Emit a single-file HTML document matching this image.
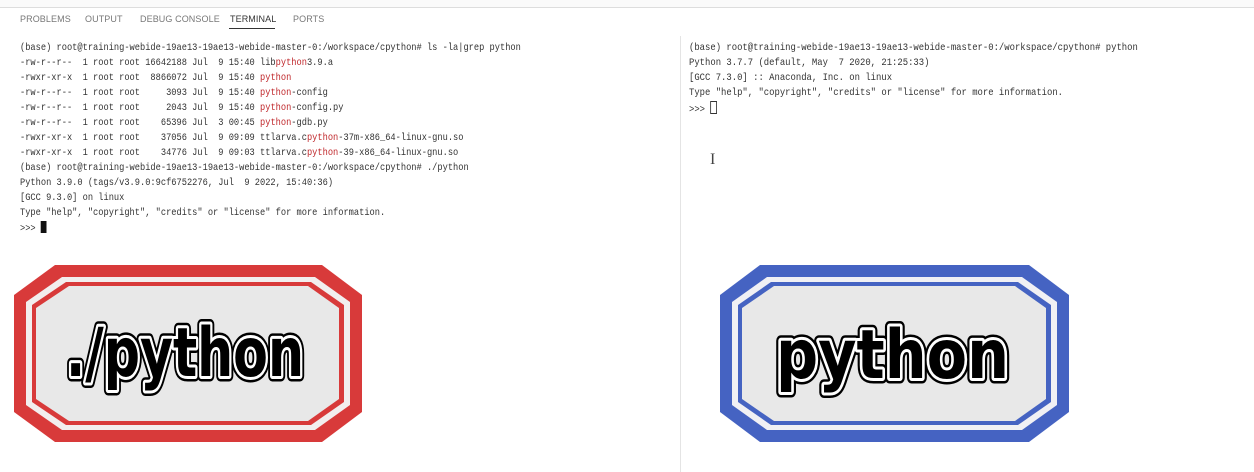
<!DOCTYPE html>
<html><head><meta charset="utf-8"><style>
html,body{margin:0;padding:0;background:#fff;width:1254px;height:472px;overflow:hidden;position:relative;font-family:"Liberation Sans",sans-serif}
.top{position:absolute;left:0;top:0;width:1254px;height:7px;border-bottom:1px solid #ddd;background:#fafafa}
.tab{position:absolute;top:14px;font-size:9px;color:#777;letter-spacing:0.1px}
.term{position:absolute;font-family:"Liberation Mono",monospace;font-size:10.5px;line-height:15px;color:#333;white-space:pre;transform-origin:0 0}
.l{left:20px;top:41px;transform:scaleX(0.828)}
.r{left:689px;top:41px;transform:scaleX(0.848)}
.h{color:#c0282c}
.vd{position:absolute;left:680px;top:36px;width:1px;height:436px;background:#e4e4e4}
.cur{display:inline-block;width:7px;height:12px;background:#111;vertical-align:-2px}
.cur2{display:inline-block;width:6px;height:11px;border:1px solid #333;vertical-align:-2px}
</style></head><body>
<div class="top"></div>
<div class="tab" style="left:20px">PROBLEMS</div>
<div class="tab" style="left:85px">OUTPUT</div>
<div class="tab" style="left:140px">DEBUG CONSOLE</div>
<div class="tab" style="left:230px;color:#333">TERMINAL</div>
<div style="position:absolute;left:229px;top:28px;width:46px;height:1px;background:#333"></div>
<div class="tab" style="left:293px">PORTS</div>
<div class="vd"></div>
<div class="term l">(base) root@training-webide-19ae13-19ae13-webide-master-0:/workspace/cpython# ls -la|grep python
-rw-r--r--  1 root root 16642188 Jul  9 15:40 lib<span class="h">python</span>3.9.a
-rwxr-xr-x  1 root root  8866072 Jul  9 15:40 <span class="h">python</span>
-rw-r--r--  1 root root     3093 Jul  9 15:40 <span class="h">python</span>-config
-rw-r--r--  1 root root     2043 Jul  9 15:40 <span class="h">python</span>-config.py
-rw-r--r--  1 root root    65396 Jul  3 00:45 <span class="h">python</span>-gdb.py
-rwxr-xr-x  1 root root    37056 Jul  9 09:09 ttlarva.c<span class="h">python</span>-37m-x86_64-linux-gnu.so
-rwxr-xr-x  1 root root    34776 Jul  9 09:03 ttlarva.c<span class="h">python</span>-39-x86_64-linux-gnu.so
(base) root@training-webide-19ae13-19ae13-webide-master-0:/workspace/cpython# ./python
Python 3.9.0 (tags/v3.9.0:9cf6752276, Jul  9 2022, 15:40:36)
[GCC 9.3.0] on linux
Type "help", "copyright", "credits" or "license" for more information.
&gt;&gt;&gt; <span class="cur"></span></div>
<div class="term r">(base) root@training-webide-19ae13-19ae13-webide-master-0:/workspace/cpython# python
Python 3.7.7 (default, May  7 2020, 21:25:33)
[GCC 7.3.0] :: Anaconda, Inc. on linux
Type "help", "copyright", "credits" or "license" for more information.
&gt;&gt;&gt; <span class="cur2"></span></div>
<div style="position:absolute;left:710px;top:151px;font-size:16px;color:#444;font-family:'Liberation Serif',serif">I</div>
<svg width="1254" height="472" style="position:absolute;left:0;top:0">
<g>
<polygon points="55,265 322,265 362,295 362,412 322,442 55,442 14,412 14,295" fill="#d83a3a"/>
<polygon points="62,277 315,277 350,302 350,405 315,430 62,430 26,405 26,302" fill="#f2eeee"/>
<polygon points="66,282 311,282 344,305 344,402 311,425 66,425 32,402 32,305" fill="#d83a3a"/>
<polygon points="69,286 308,286 339,308 339,399 308,421 69,421 36,399 36,308" fill="#e8e8e8"/>
</g>
<g>
<polygon points="760,265 1029,265 1069,295 1069,412 1029,442 760,442 720,412 720,295" fill="#4563c2"/>
<polygon points="767,277 1022,277 1057,302 1057,405 1022,430 767,430 732,405 732,302" fill="#f0f0f4"/>
<polygon points="771,282 1018,282 1051,305 1051,402 1018,425 771,425 738,402 738,305" fill="#4563c2"/>
<polygon points="774,286 1015,286 1046,308 1046,399 1015,421 774,421 742,399 742,308" fill="#e8e8e8"/>
</g>
<g font-family="DejaVu Sans, sans-serif" font-weight="bold" font-size="68" stroke-linejoin="round">
<text x="66" y="376" textLength="238" lengthAdjust="spacingAndGlyphs" fill="#000" stroke="#000" stroke-width="11">./python</text>
<text x="66" y="376" textLength="238" lengthAdjust="spacingAndGlyphs" fill="#000" stroke="#fff" stroke-width="6">./python</text>
<text x="66" y="376" textLength="238" lengthAdjust="spacingAndGlyphs" fill="#000">./python</text>
<text x="776" y="378" textLength="233" lengthAdjust="spacingAndGlyphs" fill="#000" stroke="#000" stroke-width="11">python</text>
<text x="776" y="378" textLength="233" lengthAdjust="spacingAndGlyphs" fill="#000" stroke="#fff" stroke-width="6">python</text>
<text x="776" y="378" textLength="233" lengthAdjust="spacingAndGlyphs" fill="#000">python</text>
</g>
</svg>
</body></html>
